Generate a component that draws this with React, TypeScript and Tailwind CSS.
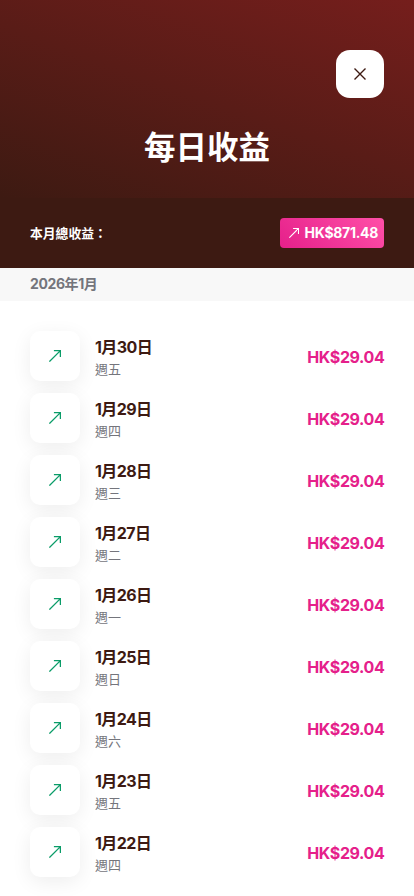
interface DayEarning {
  month: string;
  day: string;
  weekday: string;
  amount: string;
}

const days: DayEarning[] = [
  { month: "1", day: "30", weekday: "週五", amount: "HK$29.04" },
  { month: "1", day: "29", weekday: "週四", amount: "HK$29.04" },
  { month: "1", day: "28", weekday: "週三", amount: "HK$29.04" },
  { month: "1", day: "27", weekday: "週二", amount: "HK$29.04" },
  { month: "1", day: "26", weekday: "週一", amount: "HK$29.04" },
  { month: "1", day: "25", weekday: "週日", amount: "HK$29.04" },
  { month: "1", day: "24", weekday: "週六", amount: "HK$29.04" },
  { month: "1", day: "23", weekday: "週五", amount: "HK$29.04" },
  { month: "1", day: "22", weekday: "週四", amount: "HK$29.04" },
];

function ArrowIcon({ className }: { className: string }) {
  return (
    <svg viewBox="0 0 12 12" fill="none" stroke="currentColor" className={className}>
      <path d="M0.4 11.6 11.4 0.6M4.9 0.6h6.5v6.5" strokeWidth="1.3" />
    </svg>
  );
}

function DayRow({ item }: { item: DayEarning }) {
  return (
    <li className="flex h-[50px] items-center">
      <div className="flex size-[50px] shrink-0 items-center justify-center rounded-[10px] bg-white shadow-[0_5px_20px_rgba(0,0,0,0.07)]">
        <ArrowIcon className="size-3 text-[#0a9c68]" />
      </div>
      <div className="ml-[15px] flex-1 pt-0.5">
        <p className="h-6 text-[16px] leading-6 font-bold tracking-[-0.6px] text-[#3d1a12]">
          {item.month}月{item.day}日
        </p>
        <p className="h-5 text-[13px] leading-5 text-[#74757c]">{item.weekday}</p>
      </div>
      <span className="-mr-[0.4px] pt-0.5 text-[16px] leading-6 font-bold tracking-[-0.4px] text-[#e5208a]">
        {item.amount}
      </span>
    </li>
  );
}

export default function App() {
  return (
    <div className="h-[896px] w-full overflow-hidden bg-white font-['Inter','Noto_Sans_CJK_TC',sans-serif]">
      {/* Header */}
      <header className="flex h-[198px] flex-col bg-[linear-gradient(20deg,#3d1a12,#751e1c)] px-[30px] pt-[50px]">
        <button
          aria-label="關閉"
          className="flex size-12 items-center justify-center self-end rounded-[14px] bg-white text-[#3d1a12]"
        >
          <svg viewBox="0 0 12 12" fill="none" stroke="currentColor" className="size-3">
            <path d="M0.5 0.5l11 11M11.5 0.5l-11 11" strokeWidth="1.4" />
          </svg>
        </button>
        <h1 className="mt-[26px] text-center text-[31.5px] leading-[48px] font-bold text-white">
          每日收益
        </h1>
      </header>

      {/* Monthly total */}
      <section className="flex h-[70px] items-center justify-between bg-[#3d1a12] px-[30px] text-white">
        <span className="pt-0.5 text-[12.8px] leading-5 font-bold">本月總收益：</span>
        <span className="flex h-[30px] w-[104px] items-center justify-between rounded bg-[linear-gradient(45deg,#e5208a,#ff4fa8)] pr-[6px] pl-[9px]">
          <ArrowIcon className="size-[10px]" />
          <span className="text-[14px] leading-5 font-bold tracking-[-0.3px]">HK$871.48</span>
        </span>
      </section>

      <h2 className="h-[33px] bg-[#f8f8f8] px-[30px] text-[14px] leading-8 font-bold tracking-[-0.4px] text-[#74757c]">
        2026年1月
      </h2>

      <ul className="flex flex-col gap-3 px-[30px] pt-[30px]">
        {days.map((item) => (
          <DayRow key={item.day} item={item} />
        ))}
      </ul>
    </div>
  );
}
